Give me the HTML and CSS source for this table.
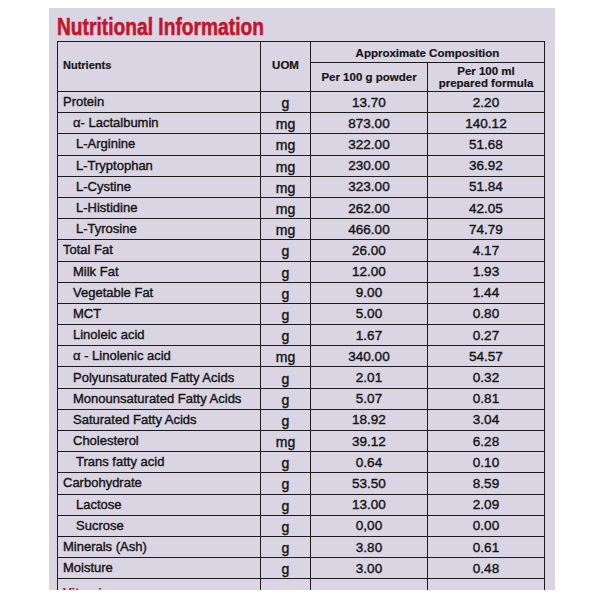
FILE: index.html
```html
<!DOCTYPE html>
<html>
<head>
<meta charset="utf-8">
<link rel="stylesheet" href="styles.css">
</head>
<body>
<div class="paper">
  <h1 class="title"><span>Nutritional Information</span></h1>
  <div class="tbl">
    <div class="head">
      <div class="hc h-nut">Nutrients</div>
      <div class="hc h-uom">UOM</div>
      <div class="hc h-app">Approximate Composition</div>
      <div class="hc h-p1">Per 100 g powder</div>
      <div class="hc h-p2">Per 100 ml<br>prepared formula</div>
    </div>
    <div class="row"><div class="c n top">Protein</div><div class="c u">g</div><div class="c v">13.70</div><div class="c v">2.20</div></div>
    <div class="row"><div class="c n sub">α- Lactalbumin</div><div class="c u">mg</div><div class="c v">873.00</div><div class="c v">140.12</div></div>
    <div class="row"><div class="c n sub2">L-Arginine</div><div class="c u">mg</div><div class="c v">322.00</div><div class="c v">51.68</div></div>
    <div class="row"><div class="c n sub2">L-Tryptophan</div><div class="c u">mg</div><div class="c v">230.00</div><div class="c v">36.92</div></div>
    <div class="row"><div class="c n sub2">L-Cystine</div><div class="c u">mg</div><div class="c v">323.00</div><div class="c v">51.84</div></div>
    <div class="row"><div class="c n sub2">L-Histidine</div><div class="c u">mg</div><div class="c v">262.00</div><div class="c v">42.05</div></div>
    <div class="row"><div class="c n sub2">L-Tyrosine</div><div class="c u">mg</div><div class="c v">466.00</div><div class="c v">74.79</div></div>
    <div class="row"><div class="c n top">Total Fat</div><div class="c u">g</div><div class="c v">26.00</div><div class="c v">4.17</div></div>
    <div class="row"><div class="c n sub">Milk Fat</div><div class="c u">g</div><div class="c v">12.00</div><div class="c v">1.93</div></div>
    <div class="row"><div class="c n sub">Vegetable Fat</div><div class="c u">g</div><div class="c v">9.00</div><div class="c v">1.44</div></div>
    <div class="row"><div class="c n sub">MCT</div><div class="c u">g</div><div class="c v">5.00</div><div class="c v">0.80</div></div>
    <div class="row"><div class="c n sub">Linoleic acid</div><div class="c u">g</div><div class="c v">1.67</div><div class="c v">0.27</div></div>
    <div class="row"><div class="c n sub">α - Linolenic acid</div><div class="c u">mg</div><div class="c v">340.00</div><div class="c v">54.57</div></div>
    <div class="row"><div class="c n sub">Polyunsaturated Fatty Acids</div><div class="c u">g</div><div class="c v">2.01</div><div class="c v">0.32</div></div>
    <div class="row"><div class="c n sub">Monounsaturated Fatty Acids</div><div class="c u">g</div><div class="c v">5.07</div><div class="c v">0.81</div></div>
    <div class="row"><div class="c n sub">Saturated Fatty Acids</div><div class="c u">g</div><div class="c v">18.92</div><div class="c v">3.04</div></div>
    <div class="row"><div class="c n sub">Cholesterol</div><div class="c u">mg</div><div class="c v">39.12</div><div class="c v">6.28</div></div>
    <div class="row"><div class="c n sub2">Trans fatty acid</div><div class="c u">g</div><div class="c v">0.64</div><div class="c v">0.10</div></div>
    <div class="row"><div class="c n top">Carbohydrate</div><div class="c u">g</div><div class="c v">53.50</div><div class="c v">8.59</div></div>
    <div class="row"><div class="c n sub2">Lactose</div><div class="c u">g</div><div class="c v">13.00</div><div class="c v">2.09</div></div>
    <div class="row"><div class="c n sub2">Sucrose</div><div class="c u">g</div><div class="c v">0,00</div><div class="c v">0.00</div></div>
    <div class="row"><div class="c n top">Minerals (Ash)</div><div class="c u">g</div><div class="c v">3.80</div><div class="c v">0.61</div></div>
    <div class="row"><div class="c n top">Moisture</div><div class="c u">g</div><div class="c v">3.00</div><div class="c v">0.48</div></div>
    <div class="row last"><div class="c n top red">Vitamins</div><div class="c u"></div><div class="c v"></div><div class="c v"></div></div>
  </div>
</div>
</body>
</html>
```
FILE: styles.css
```css
html, body {
  margin: 0;
  padding: 0;
  background: #ffffff;
}
body {
  font-family: "Liberation Sans", Arial, sans-serif;
  color: #161616;
}
.paper {
  margin: 8px 0 0 49px;
  width: 506px;
  height: 582px;
  overflow: hidden;
  box-sizing: border-box;
  padding: 5px 0 0 8px;
  background-color: #d9d5e3;
}
.title {
  margin: 0;
  height: 28px;
  line-height: 28px;
  font-size: 24px;
  font-weight: bold;
  color: #c3162c;
  white-space: nowrap;
}
.title span {
  display: inline-block;
  transform: scaleX(0.8);
  transform-origin: left center;
  -webkit-text-stroke: 0.6px #c3162c;
}
.tbl {
  width: 488px;
  box-sizing: border-box;
  border: 1.5px solid #1b1b1b;
  border-bottom: none;
}
.head {
  display: grid;
  grid-template-columns: 203px 50px 117px 1fr;
  grid-template-rows: 21px 29px;
}
.hc {
  box-sizing: border-box;
  border-bottom: 1.5px solid #1b1b1b;
  font-weight: bold;
  font-size: 11.5px;
  line-height: 12px;
  display: flex;
  align-items: center;
  justify-content: center;
  text-align: center;
  -webkit-text-stroke: 0.2px #161616;
}
.h-nut {
  grid-row: 1 / 3;
  grid-column: 1;
  justify-content: flex-start;
  padding: 0 0 4px 5px;
  font-size: 11px;
  border-right: 1.5px solid #1b1b1b;
}
.h-uom {
  grid-row: 1 / 3;
  grid-column: 2;
  padding-bottom: 3px;
  border-right: 1.5px solid #1b1b1b;
}
.h-app {
  grid-row: 1;
  grid-column: 3 / 5;
  padding-top: 1px;
}
.h-p1 {
  grid-row: 2;
  grid-column: 3;
  border-right: 1.5px solid #1b1b1b;
  padding-bottom: 1px;
}
.h-p2 {
  grid-row: 2;
  grid-column: 4;
  padding-bottom: 1px;
}
.row {
  display: grid;
  grid-template-columns: 203px 50px 117px 1fr;
  height: 21.2px;
  box-sizing: border-box;
  border-bottom: 1.5px solid #1b1b1b;
}
.row.last {
  border-bottom: none;
  height: 20px;
}
.c {
  box-sizing: border-box;
  display: flex;
  align-items: center;
  font-size: 13px;
  white-space: nowrap;
  -webkit-text-stroke: 0.4px #161616;
}
.n {
  border-right: 1.5px solid #1b1b1b;
  padding-bottom: 1px;
}
.u {
  border-right: 1.5px solid #1b1b1b;
  justify-content: center;
  font-size: 14px;
  padding-top: 2px;
}
.v {
  justify-content: center;
  font-size: 13.5px;
}
.v:nth-child(3) {
  border-right: 1.5px solid #1b1b1b;
}
.top {
  padding-left: 5px;
}
.sub {
  padding-left: 15px;
}
.sub2 {
  padding-left: 18px;
}
.red {
  color: #c3162c;
  -webkit-text-stroke: 0.25px #c3162c;
  font-weight: bold;
  padding-top: 6px;
}
```
